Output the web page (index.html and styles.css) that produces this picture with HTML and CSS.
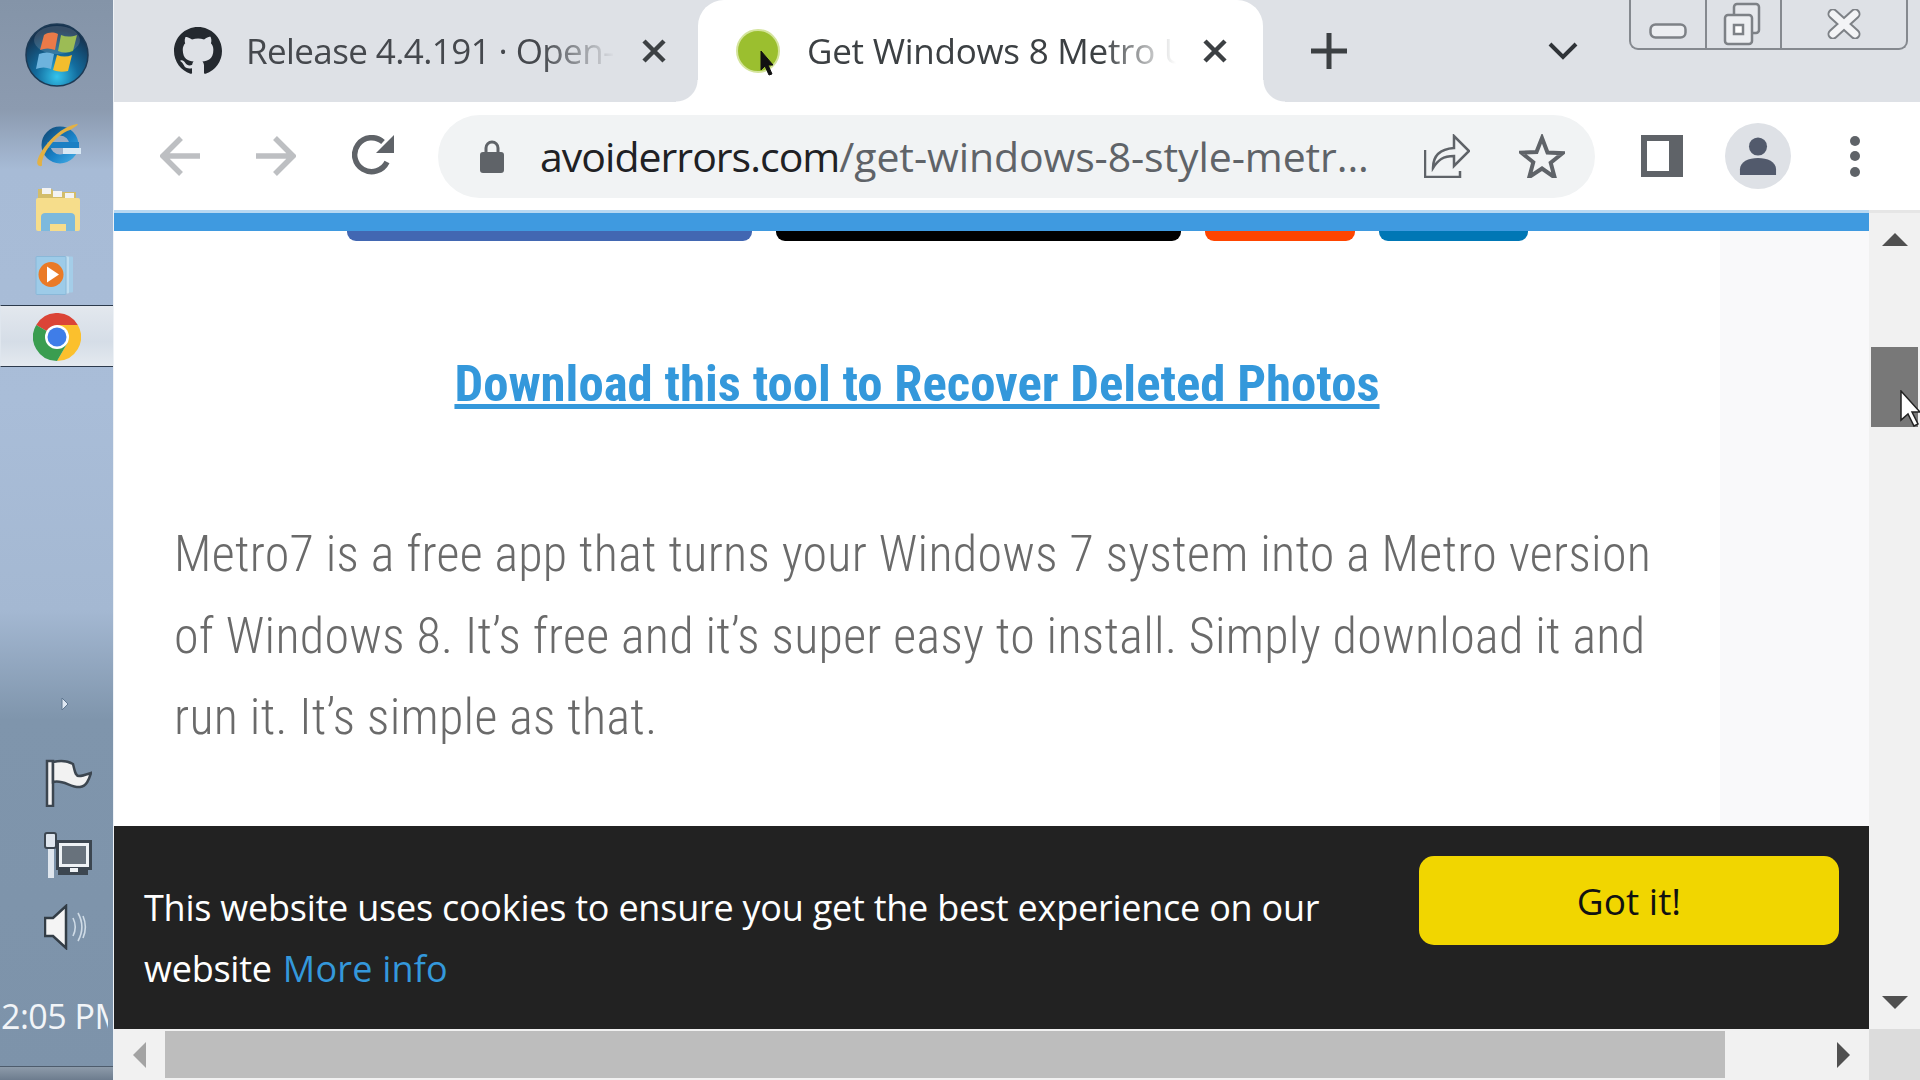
FILE: index.html
```html
<!DOCTYPE html>
<html lang="en">
<head>
    <meta charset="utf-8">
    <title>Get Windows 8 Metro UI</title>
    <link rel="stylesheet" href="styles.css">
</head>
<body>
<div class="desktop">

    <!-- Windows 7 taskbar, docked left -->
    <aside class="taskbar">
        <svg class="orb" viewBox="0 0 64 64">
            <defs>
                <radialGradient id="orbFill" cx="50%" cy="85%" r="75%">
                    <stop offset="0" stop-color="#35c4ec"/>
                    <stop offset="0.45" stop-color="#136c9e"/>
                    <stop offset="1" stop-color="#15324f"/>
                </radialGradient>
                <linearGradient id="ieFill" x1="0" y1="0" x2="1" y2="1">
                    <stop offset="0" stop-color="#12507f"/>
                    <stop offset="0.6" stop-color="#1a83c9"/>
                    <stop offset="1" stop-color="#3fa6e0"/>
                </linearGradient>
            </defs>
            <circle cx="32" cy="32" r="31" fill="url(#orbFill)" stroke="#1d3a55" stroke-width="1.5"/>
            <path d="M19 12c5-3 9-3 14-1l-3 16c-5-2-10-2-15 0z" fill="#e8652a"/>
            <path d="M36 12c5 2 10 2 16 0l-4 16c-5 2-10 2-15 0z" fill="#8cb13a"/>
            <path d="M14 31c5-2 10-2 15 0l-3 15c-5-2-10-2-15 0z" fill="#6db3dd"/>
            <path d="M32 32c5 2 10 2 15 0l-4 16c-5 1-10 1-15-1z" fill="#f3bd2d"/>
            <ellipse cx="32" cy="17" rx="23" ry="14" fill="#fff" opacity="0.14"/>
        </svg>
        <svg class="app-icon ie" viewBox="0 0 48 48">
            <circle cx="27" cy="24" r="14" fill="none" stroke="url(#ieFill)" stroke-width="9"/>
            <rect x="14" y="21" width="32" height="6" fill="#1a7fc4"/>
            <rect x="30" y="27" width="18" height="6" fill="#d8e8f4"/>
            <path d="M5 44C0 38 22 6 44 3c3 0-2 3-7 6C22 14 8 34 9 44c0 2-3 1-4 0z" fill="#e3b144"/>
        </svg>
        <svg class="app-icon folder" viewBox="0 0 48 48">
            <path d="M4 4h14l2 3h22v6H4z" fill="#d3bd6a"/>
            <rect x="8" y="3" width="9" height="6" fill="#f3f3f3"/>
            <rect x="19" y="6" width="9" height="6" fill="#f3f3f3"/>
            <rect x="31" y="8" width="9" height="6" fill="#f3f3f3"/>
            <rect x="2" y="13" width="44" height="33" rx="2" fill="#f6dd8b"/>
            <path d="M7 46V32c0-3 2-4 4-4h26c2 0 4 1 4 4v14h-9v-7H16v7z" fill="#7cb9dd"/>
        </svg>
        <svg class="app-icon player" viewBox="0 0 40 40">
            <rect x="10" y="1" width="28" height="36" rx="1" fill="#a4cde8"/>
            <rect x="6" y="1" width="28" height="37" rx="1" fill="#bfddf0"/>
            <rect x="1" y="1" width="30" height="38" rx="1" fill="#9dcbe8" stroke="#8ab8d8"/>
            <circle cx="16" cy="19" r="12.500" fill="#ea7a26"/>
            <path d="M12 11l12 8-12 8z" fill="#fff"/>
        </svg>
        <div class="task-active">
            <svg class="chrome-logo" viewBox="0 0 48 48">
                <path d="M24 24L13.6 18 3.2 12A24 24 0 0 1 44.8 12H24z" fill="#db4437"/>
                <path d="M24 12H44.8A24 24 0 0 1 24 48L34.4 30z" fill="#fbc02d"/>
                <path d="M3.2 12A24 24 0 0 0 24 48L34.4 30 24 24z" fill="#3a9d50"/>
                <circle cx="24" cy="24" r="12" fill="#fff"/>
                <circle cx="24" cy="24" r="9.5" fill="#3f7de8"/>
            </svg>
        </div>
        <div class="tray">
            <svg class="tray-arrow" viewBox="0 0 8 14"><path d="M1 1l6 6-6 6z" fill="#dfe8f3" stroke="#5e7690"/></svg>
            <svg class="tray-icon flag" viewBox="0 0 48 48">
                <path d="M3 2h6v45H3z" fill="#f4f4f4" stroke="#3c4650" stroke-width="2.5"/>
                <path d="M9 3c8-2 15-1 20 2 2 7 2 12 6 12 4 0 9-2 12-3-2 6-4 13-11 14-9 1-17-8-27-5z" fill="#f2f2f2" stroke="#3c4650" stroke-width="2.5"/>
            </svg>
            <svg class="tray-icon network" viewBox="0 0 48 46">
                <rect x="12" y="8" width="36" height="30" fill="#3c4650"/>
                <rect x="15" y="11" width="30" height="24" fill="#eef2f5"/>
                <rect x="18" y="14" width="24" height="18" fill="#68727c"/>
                <path d="M14 38h30v5H14z" fill="#3c4650"/>
                <rect x="26" y="36" width="8" height="4" fill="#eef2f5"/>
                <rect x="4" y="16" width="6" height="30" fill="#dfe6ee"/>
                <rect x="1" y="1" width="11" height="15" rx="2" fill="#dfe6ee" stroke="#3c4650" stroke-width="2"/>
            </svg>
            <svg class="tray-icon speaker" viewBox="0 0 44 46">
                <path d="M1 14h8L22 2v42L9 32H1z" fill="#f4f4f4" stroke="#333d46" stroke-width="2.5"/>
                <path d="M29 14c3 6 3 12 0 18M34 9c5 9 5 19 0 28M39 12c3 7 3 15 0 22" fill="none" stroke="#cfdbe6" stroke-width="1.6"/>
            </svg>
            <div class="clock">2:05 PM</div>
        </div>
        <div class="show-bar"></div>
    </aside>

    <div class="browser">
        <!-- tabs -->
        <div class="tabstrip">
            <div class="tab tab-first">
                <svg class="github" viewBox="0 0 16 16"><path fill="#24292f" d="M8 0C3.58 0 0 3.58 0 8c0 3.54 2.29 6.53 5.47 7.59.4.07.55-.17.55-.38 0-.19-.01-.82-.01-1.49-2.01.37-2.53-.49-2.69-.94-.09-.23-.48-.94-.82-1.13-.28-.15-.68-.52-.01-.53.63-.01 1.08.58 1.23.82.72 1.21 1.87.87 2.33.66.07-.52.28-.87.51-1.07-1.78-.2-3.64-.89-3.64-3.95 0-.87.31-1.59.82-2.15-.08-.2-.36-1.02.08-2.12 0 0 .67-.21 2.2.82.64-.18 1.32-.27 2-.27.68 0 1.36.09 2 .27 1.53-1.04 2.2-.82 2.2-.82.44 1.1.16 1.92.08 2.12.51.56.82 1.27.82 2.15 0 3.07-1.87 3.75-3.65 3.95.29.25.54.73.54 1.48 0 1.07-.01 1.93-.01 2.2 0 .21.15.46.55.38A8.013 8.013 0 0016 8c0-4.42-3.58-8-8-8z"/></svg>
                <span class="tab-title">Release 4.4.191 · Open-Shell</span>
                <svg class="tab-close" viewBox="0 0 24 24"><path d="M2 2l20 20M22 2L2 22" stroke="#3c4043" stroke-width="4.5" fill="none"/></svg>
            </div>
            <div class="tab tab-active">
                <span class="favicon"></span>
                <span class="tab-title">Get Windows 8 Metro UI</span>
                <svg class="tab-close" viewBox="0 0 24 24"><path d="M2 2l20 20M22 2L2 22" stroke="#3c4043" stroke-width="4.5" fill="none"/></svg>
            </div>
            <svg class="new-tab" viewBox="0 0 38 38"><path d="M19 1v36M1 19h36" stroke="#3c4043" stroke-width="5" fill="none"/></svg>
            <svg class="tab-list" viewBox="0 0 30 20"><path d="M2 3l13 13L28 3" stroke="#2f3338" stroke-width="4" fill="none"/></svg>
            <div class="win-controls">
                <div class="win-btn btn-min">
                    <svg viewBox="0 0 38 16"><rect x="1.500" y="1.500" width="35" height="13" rx="5" fill="#eceef1" stroke="#7d8186" stroke-width="2.500"/></svg>
                </div>
                <div class="win-btn btn-restore">
                    <svg viewBox="0 0 38 44">
                        <rect x="11" y="2" width="25" height="29" rx="3" fill="#e6e8ec" stroke="#7d8186" stroke-width="2.500"/>
                        <rect x="2" y="13" width="27" height="29" rx="3" fill="#eceef1" stroke="#7d8186" stroke-width="2.500"/>
                        <rect x="11" y="23" width="9" height="9" fill="#fff" stroke="#7d8186" stroke-width="2.500"/>
                    </svg>
                </div>
                <div class="win-btn btn-close">
                    <svg viewBox="0 0 34 30">
                        <path d="M6 5l22 20M28 5L6 25" stroke="#7d8186" stroke-width="11" stroke-linecap="round" fill="none"/>
                        <path d="M6 5l22 20M28 5L6 25" stroke="#f3f4f6" stroke-width="7" stroke-linecap="round" fill="none"/>
                    </svg>
                </div>
            </div>
        </div>

        <!-- address bar -->
        <div class="toolbar">
            <svg class="tool-icon icon-back" viewBox="0 0 42 42"><path d="M40 21H4M21 3L3 21l18 18" stroke="#bdbfc2" stroke-width="5.500" fill="none"/></svg>
            <svg class="tool-icon icon-forward" viewBox="0 0 42 42"><path d="M2 21h36M21 3l18 18-18 18" stroke="#bdbfc2" stroke-width="5.500" fill="none"/></svg>
            <svg class="tool-icon icon-reload" viewBox="0 0 42 42">
                <path d="M35 27A17 17 0 1 1 31 7" stroke="#5f6368" stroke-width="5.500" fill="none"/>
                <path d="M42 0v18H24z" fill="#5f6368"/>
            </svg>
            <div class="omnibox">
                <svg class="lock" viewBox="0 0 24 34">
                    <path d="M6 14V9a6 6 0 0 1 12 0v5" stroke="#5f6368" stroke-width="3" fill="none"/>
                    <rect y="13" width="24" height="21" rx="3" fill="#5f6368"/>
                </svg>
                <div class="url"><span class="host">avoiderrors.com</span>/get-windows-8-style-metr...</div>
                <svg class="omni-icon icon-share" viewBox="0 0 46 44">
                    <path d="M1 16v27h35v-6" stroke="#5f6368" stroke-width="2.500" fill="none"/>
                    <path d="M9 34c0-12 7-19 21-20V2l15 15-15 15V22C19 22 14 26 9 34z" fill="#f1f3f4" stroke="#5f6368" stroke-width="2.500"/>
                </svg>
                <svg class="omni-icon icon-star" viewBox="0 0 46 44"><path d="M23 4l5.500 14.500 15 .7-11.800 9.500 4 14.800L23 34.500 10.300 43l4-14.800L2.500 18.700l15-.7z" fill="none" stroke="#5f6368" stroke-width="4"/></svg>
            </div>
            <div class="side-panel-icon"><span></span></div>
            <div class="avatar">
                <svg viewBox="0 0 38 40"><circle cx="19" cy="10" r="9.500" fill="#525a6c"/><path d="M0 40v-6c0-8 9-12 19-12s19 4 19 12v6z" fill="#525a6c"/></svg>
            </div>
            <div class="menu-dots"><i></i><i></i><i></i></div>
        </div>

        <!-- page area with the two scrollbars -->
        <div class="viewport">
            <div class="viewport-main">
                <div class="page">
                    <div class="site-bar"></div>
                    <div class="page-cols">
                        <main class="article">
                            <div class="share-row">
                                <span class="share share-fb"></span>
                                <span class="share share-x"></span>
                                <span class="share share-red"></span>
                                <span class="share share-in"></span>
                            </div>
                            <h2 class="dl-link"><a href="#">Download this tool to Recover Deleted Photos</a></h2>
                            <p class="lead">Metro7 is a free app that turns your Windows 7 system into a Metro version<br>of Windows 8. It’s free and it’s super easy to install. Simply download it and<br>run it. It’s simple as that.</p>
                        </main>
                        <div class="page-side"></div>
                    </div>
                    <div class="cookie-bar">
                        <p class="cookie-text">This website uses cookies to ensure you get the best experience on our website <a href="#">More info</a></p>
                        <div class="cookie-btn">Got it!</div>
                    </div>
                </div>
                <div class="vscroll">
                    <span class="arrow arrow-up"></span>
                    <div class="vthumb"></div>
                    <span class="arrow arrow-down"></span>
                </div>
            </div>
            <div class="hscroll">
                <div class="htrack">
                    <span class="arrow arrow-left"></span>
                    <div class="hthumb"></div>
                    <span class="arrow arrow-right"></span>
                </div>
                <div class="corner"></div>
            </div>
        </div>
    </div>

    <!-- mouse pointers in the recording -->
    <svg class="pointer pointer-tab" viewBox="0 0 14 26"><path d="M1 1l12 14H8l4 9-3 1-4-9-4 4z" fill="#111" stroke="#111"/></svg>
    <svg class="pointer pointer-scroll" viewBox="0 0 22 38"><path d="M1 1l19 21h-8l6 12-4 2-6-12-7 6z" fill="#fff" stroke="#222" stroke-width="1.500"/></svg>
</div>
</body>
</html>
```

FILE: styles.css
```css
* {
    box-sizing: border-box;
}

body {
    margin: 0;
    overflow: hidden;
    font-family: "Open Sans", "Liberation Sans", sans-serif;
}

.desktop {
    position: relative;
    display: flex;
    width: 1920px;
    height: 1080px;
    overflow: hidden;
}

/* taskbar */
.taskbar {
    width: 114px;
    height: 1080px;
    flex-shrink: 0;
    display: flex;
    flex-direction: column;
    border-right: 1px solid #eef2f6;
    background: linear-gradient(180deg, #8494a8 0, #8c9bb0 110px, #a7bbd6 170px, #a9bdd8 400px, #a4b8d2 610px, #7f95ac 720px, #7d93aa 100%);
}

.orb {
    width: 64px;
    height: 64px;
    margin: 23px 0 0 25px;
}

.app-icon {
    display: block;
}

.ie {
    width: 48px;
    height: 48px;
    margin: 34px 0 0 33px;
}

.folder {
    width: 48px;
    height: 48px;
    margin: 16px 0 0 34px;
}

.player {
    width: 40px;
    height: 41px;
    margin: 22px 0 0 35px;
}

.task-active {
    width: 113px;
    height: 62px;
    margin: 9px 0 0 0;
    padding: 7px 0 0 32px;
    border: 1px solid #2c3a4c;
    border-left-color: #dfe6ee;
    border-right: 0;
    background: linear-gradient(180deg, #e3e8ee, #d5dde7 60%, #e4e9ef);
}

.chrome-logo {
    display: block;
    width: 48px;
    height: 48px;
}

.tray {
    flex: 1;
    display: flex;
    flex-direction: column;
    padding-top: 330px;
}

.tray-arrow {
    width: 8px;
    height: 14px;
    margin-left: 61px;
}

.tray-icon {
    display: block;
    margin-left: 44px;
}

.flag {
    width: 48px;
    height: 48px;
    margin-top: 48px;
}

.network {
    width: 48px;
    height: 46px;
    margin-top: 25px;
}

.speaker {
    width: 44px;
    height: 46px;
    margin-top: 26px;
}

.clock {
    width: 108px;
    margin-top: 44px;
    padding-left: 1px;
    overflow: hidden;
    white-space: nowrap;
    font-size: 34px;
    line-height: 44px;
    letter-spacing: -0.5px;
    color: #f2f5f8;
}

.show-bar {
    height: 14px;
    border-top: 1px solid #4e5c6c;
    background: linear-gradient(180deg, #8d9baa, #6d7c8e);
}

/* browser */
.browser {
    width: 1806px;
    display: flex;
    flex-direction: column;
}

.tabstrip {
    position: relative;
    display: flex;
    align-items: center;
    height: 102px;
    background: #dee1e6;
}

.tab {
    display: flex;
    align-items: center;
    flex-shrink: 0;
    height: 102px;
}

.tab-first {
    width: 584px;
    padding-left: 60px;
}

.tab-active {
    position: relative;
    width: 565px;
    padding-left: 38px;
    background: #fff;
    border-radius: 26px 26px 0 0;
}

.tab-active::before,
.tab-active::after {
    content: "";
    position: absolute;
    bottom: 0;
    width: 22px;
    height: 22px;
}

.tab-active::before {
    left: -22px;
    background: radial-gradient(circle at 0 0, #dee1e6 21px, #fff 22px);
}

.tab-active::after {
    right: -22px;
    background: radial-gradient(circle at 100% 0, #dee1e6 21px, #fff 22px);
}

.github {
    width: 48px;
    height: 48px;
    flex-shrink: 0;
}

.tab-title {
    width: 369px;
    margin-left: 24px;
    overflow: hidden;
    white-space: nowrap;
    font-size: 35px;
    line-height: 48px;
    letter-spacing: -0.6px;
    color: #45484d;
    -webkit-mask-image: linear-gradient(90deg, #000 80%, transparent 100%);
    mask-image: linear-gradient(90deg, #000 80%, transparent 100%);
}

.tab-close {
    width: 24px;
    height: 24px;
    margin-left: 27px;
    flex-shrink: 0;
}

.favicon {
    width: 44px;
    height: 44px;
    flex-shrink: 0;
    border-radius: 50%;
    background: #9bbf2f;
    border: 2px solid #d4e49c;
}

.tab-active .tab-title {
    margin-left: 27px;
    letter-spacing: -0.25px;
    color: #3c4043;
}

.new-tab {
    width: 38px;
    height: 38px;
    margin-left: 47px;
}

.tab-list {
    width: 30px;
    height: 20px;
    margin-left: 200px;
}

.win-controls {
    position: absolute;
    top: 0;
    right: 12px;
    display: flex;
    width: 279px;
    height: 50px;
    border: 2px solid #85898f;
    border-top: 0;
    border-radius: 0 0 9px 9px;
}

.win-btn {
    display: flex;
    align-items: center;
    justify-content: center;
    border-right: 2px solid #85898f;
}

.btn-min {
    width: 76px;
    padding-top: 14px;
}

.btn-restore {
    width: 75px;
    padding-right: 3px;
}

.btn-close {
    flex: 1;
    border-right: 0;
}

.btn-min svg {
    width: 38px;
    height: 16px;
}

.btn-restore svg {
    width: 38px;
    height: 44px;
}

.btn-close svg {
    width: 34px;
    height: 30px;
}

/* toolbar */
.toolbar {
    display: flex;
    align-items: center;
    height: 108px;
    background: #fff;
}

.tool-icon {
    width: 42px;
    height: 42px;
    flex-shrink: 0;
}

.icon-back {
    margin-left: 46px;
}

.icon-forward {
    margin-left: 52px;
}

.icon-reload {
    margin-left: 56px;
}

.omnibox {
    display: flex;
    align-items: center;
    width: 1157px;
    height: 83px;
    margin-left: 44px;
    padding-left: 42px;
    border-radius: 42px;
    background: #f1f3f4;
}

.lock {
    width: 24px;
    height: 34px;
    flex-shrink: 0;
}

.url {
    width: 829px;
    margin-left: 36px;
    white-space: nowrap;
    overflow: hidden;
    font-size: 41px;
    line-height: 60px;
    letter-spacing: -0.1px;
    color: #5f6368;
}

.host {
    letter-spacing: -0.97px;
    color: #202124;
}

.omni-icon {
    width: 46px;
    height: 44px;
    flex-shrink: 0;
}

.icon-share {
    margin-left: 55px;
}

.icon-star {
    margin-left: 49px;
}

.side-panel-icon {
    width: 42px;
    height: 42px;
    margin-left: 46px;
    padding: 6px 14px 6px 6px;
    background: #5f6368;
}

.side-panel-icon span {
    display: block;
    width: 22px;
    height: 30px;
    background: #fff;
}

.avatar {
    display: flex;
    align-items: center;
    justify-content: center;
    width: 66px;
    height: 66px;
    margin-left: 42px;
    border-radius: 50%;
    background: #dee1e6;
}

.avatar svg {
    width: 38px;
    height: 38px;
}

.menu-dots {
    display: flex;
    flex-direction: column;
    gap: 5.500px;
    margin-left: 59px;
}

.menu-dots i {
    display: block;
    width: 10px;
    height: 10px;
    border-radius: 50%;
    background: #5f6368;
}

/* page */
.viewport {
    flex: 1;
    display: flex;
    flex-direction: column;
    min-height: 0;
}

.viewport-main {
    flex: 1;
    display: flex;
    min-height: 0;
}

.page {
    width: 1755px;
    display: flex;
    flex-direction: column;
    background: #fff;
}

.site-bar {
    height: 21px;
    flex-shrink: 0;
    border-top: 3px solid #b7d8f2;
    background: #3f9ae0;
}

.page-cols {
    flex: 1;
    display: flex;
    min-height: 0;
}

.article {
    width: 1606px;
}

.page-side {
    flex: 1;
    background: #f9f9fa;
}

.share-row {
    display: flex;
    gap: 24px;
    height: 10px;
    padding-left: 233px;
}

.share {
    display: block;
    height: 10px;
    border-radius: 0 0 9px 9px;
}

.share-fb {
    width: 405px;
    background: #4267b2;
}

.share-x {
    width: 405px;
    background: #000;
}

.share-red {
    width: 150px;
    background: #ff4500;
}

.share-in {
    width: 149px;
    background: #0077b5;
}

.dl-link {
    margin: 111px 0 0;
    text-align: center;
    font-family: "Roboto", "Liberation Sans", sans-serif;
    font-stretch: condensed;
    font-size: 50.800px;
    line-height: 64px;
    font-weight: 700;
}

.dl-link a {
    color: #3498db;
}

.lead {
    margin: 98px 0 0;
    padding-left: 60px;
    white-space: nowrap;
    font-family: "Roboto", "Liberation Sans", sans-serif;
    font-stretch: condensed;
    font-weight: 300;
    font-size: 50px;
    line-height: 81.500px;
    letter-spacing: 0.3px;
    color: #6a6a6a;
}

.cookie-bar {
    display: flex;
    align-items: flex-start;
    justify-content: space-between;
    height: 203px;
    flex-shrink: 0;
    padding: 30px 30px 0 30px;
    background: #222;
}

.cookie-text {
    width: 1200px;
    margin: 21px 0 0;
    font-size: 36px;
    line-height: 61px;
    letter-spacing: -0.24px;
    color: #fff;
}

.cookie-text a {
    margin-left: 2px;
    letter-spacing: 0.2px;
    color: #3498db;
    text-decoration: none;
}

.cookie-btn {
    width: 420px;
    height: 89px;
    border-radius: 15px;
    text-align: center;
    font-size: 37px;
    line-height: 89px;
    color: #111;
    background: #f1d600;
}

/* scrollbars */
.vscroll {
    position: relative;
    width: 51px;
    background: #f1f1f1;
    border-top: 3px solid #e6e6e6;
}

.vthumb {
    width: 47px;
    height: 80px;
    margin: 134px 0 0 2px;
    background: #787878;
}

.arrow {
    position: absolute;
    width: 0;
    height: 0;
    border-style: solid;
    border-color: transparent;
}

.arrow-up {
    top: 20px;
    left: 13px;
    border-width: 0 13px 13px;
    border-bottom-color: #505050;
}

.arrow-down {
    bottom: 20px;
    left: 13px;
    border-width: 13px 13px 0;
    border-top-color: #505050;
}

.arrow-left {
    top: 13px;
    left: 19px;
    border-width: 13px 13px 13px 0;
    border-right-color: #a3a3a3;
}

.arrow-right {
    top: 13px;
    right: 19px;
    border-width: 13px 0 13px 13px;
    border-left-color: #505050;
}

.hscroll {
    display: flex;
    height: 51px;
    flex-shrink: 0;
}

.htrack {
    position: relative;
    width: 1755px;
    padding: 2px 0 2px 51px;
    background: #f1f1f1;
}

.hthumb {
    width: 1560px;
    height: 47px;
    background: #bdbdbd;
}

.corner {
    flex: 1;
    background: #dcdcdc;
}

/* pointers */
.pointer {
    position: absolute;
}

.pointer-tab {
    left: 760px;
    top: 50px;
    width: 14px;
    height: 26px;
}

.pointer-scroll {
    left: 1900px;
    top: 390px;
    width: 22px;
    height: 38px;
}
```
